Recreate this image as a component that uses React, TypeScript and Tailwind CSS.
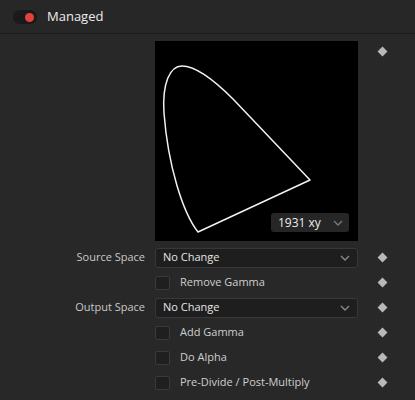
const Diamond = () => (
  <div className="w-[7px] h-[7px] rotate-45 bg-[#b8b8b8]" />
);

const Chevron = ({ color = "#8c8c8c" }: { color?: string }) => (
  <svg width="10" height="6" viewBox="0 0 10 6" fill="none">
    <polyline points="1,1 5,5 9,1" stroke={color} strokeWidth="1.3" />
  </svg>
);

const Select = ({ value }: { value: string }) => (
  <div className="flex items-center justify-between h-[20px] w-full rounded-[3px] border border-[#383838] bg-[#1e1e1e] pl-[7px] pr-[7px]">
    <span className="text-[11px] text-[#e6e6e6]">{value}</span>
    <Chevron />
  </div>
);

const Check = ({ label }: { label: string }) => (
  <div className="flex items-center gap-[10px]">
    <div className="w-[15px] h-[14px] rounded-[2px] border border-[#3a3a3a] bg-[#1f1f1f]" />
    <span className="text-[11px] text-[#cfcfcf]">{label}</span>
  </div>
);

type Row = { label?: string; select?: string; check?: string };

const rows: Row[] = [
  { label: "Source Space", select: "No Change" },
  { check: "Remove Gamma" },
  { label: "Output Space", select: "No Change" },
  { check: "Add Gamma" },
  { check: "Do Alpha" },
  { check: "Pre-Divide / Post-Multiply" },
];

export default function App() {
  return (
    <div
      className="w-[415px] h-[400px] bg-[#282828] overflow-hidden"
      style={{ fontFamily: '"Open Sans", "Noto Sans", sans-serif' }}
    >
      <div className="flex items-center h-[34px] bg-[#272727] border-b border-[#1c1c1c] pl-[13px] pt-[1px]">
        <div className="flex items-center justify-end w-[24px] h-[14px] rounded-full bg-[#1a1a1a] pr-[3px]">
          <div className="w-[9px] h-[9px] rounded-full bg-[#e5403d]" />
        </div>
        <span className="ml-[10px] text-[13px] text-[#ececec]">Managed</span>
      </div>

      <div className="grid grid-cols-[155px_203px_1fr] mt-[7px]">
        <div />
        <div className="relative h-[200px] bg-black">
          <svg width="203" height="200" viewBox="0 0 203 200" fill="none">
            <path
              d="M155 139 L43 191 C 28 172, 13 125, 9 72 C 7 42, 15 25, 27 25 C 40 25, 58 38, 78 58 L155 139 Z"
              stroke="#f2f2f2"
              strokeWidth="1.5"
              strokeLinejoin="round"
            />
          </svg>
          <div className="absolute right-[9px] bottom-[9px] flex items-center justify-between w-[78px] h-[19px] rounded-[3px] bg-[#262626] pl-[7px] pr-[6px]">
            <span className="text-[12px] text-[#ececec]">1931 xy</span>
            <Chevron color="#7a7a7a" />
          </div>
        </div>
        <div className="pl-[21px] pt-[7px]">
          <Diamond />
        </div>

        <div className="col-span-3 h-[4px]" />

        {rows.map((r, i) => (
          <div key={i} className="contents">
            <div className="flex items-center justify-end h-[25px] pr-[10px]">
              {r.label && (
                <span className="text-[11px] text-[#c8c8c8]">{r.label}</span>
              )}
            </div>
            <div className="flex items-center h-[25px]">
              {r.select && <Select value={r.select} />}
              {r.check && <Check label={r.check} />}
            </div>
            <div className="flex items-center h-[25px] pl-[21px]">
              <Diamond />
            </div>
          </div>
        ))}
      </div>
    </div>
  );
}
